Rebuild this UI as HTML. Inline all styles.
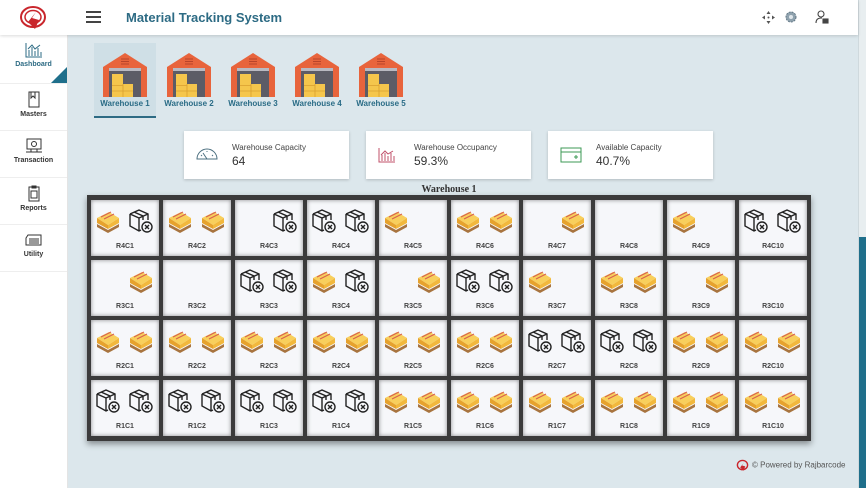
<!DOCTYPE html>
<html><head><meta charset="utf-8"><style>
*{box-sizing:border-box;margin:0;padding:0}
body{width:866px;height:488px;overflow:hidden;font-family:"Liberation Sans",sans-serif;background:#dce7ec;position:relative}
.hdr{position:absolute;left:0;top:0;width:858px;height:35px;background:#fff;box-shadow:0 1px 3px rgba(0,0,0,.15);z-index:2}
.side{position:absolute;left:0;top:35px;width:68px;height:453px;background:#fff;border-right:1px solid #e4e4e4}
.si{height:47px;border-bottom:1px solid #eee;text-align:center;font-size:7px;font-weight:bold;color:#333;padding-top:7px;position:relative}
.si svg{display:block;margin:0 auto 3px}
.sb{position:absolute;left:858px;top:0;width:8px;height:488px;background:#e8eef0;border-left:1px solid #cfd9dd}
.thumb{position:absolute;left:859px;top:237px;width:7px;height:251px;background:#1f6f8b}
.wh{position:absolute;top:43px;width:62px;height:75px;text-align:center;font-size:8px;font-weight:bold;color:#2a6c86}
.wh svg{display:block;margin:8px auto 2px}
.card{position:absolute;top:131px;height:48px;background:#fff;box-shadow:0 1px 3px rgba(0,0,0,.2)}
.card .t{position:absolute;left:48px;top:12px;font-size:8px;color:#444}
.card .v{position:absolute;left:48px;top:23px;font-size:12px;color:#333}
.card svg{position:absolute;left:12px;top:16px}
.grid{position:absolute;left:87px;top:195px;width:724px;height:246px;background:#3b3b3b;padding:5px 4px;display:grid;grid-template-columns:repeat(10,68px);grid-template-rows:repeat(4,56px);gap:4px;box-shadow:0 3px 6px rgba(0,0,0,.4)}
.c{background:#f6f7fa;position:relative;box-shadow:inset 0 0 4px rgba(0,0,0,.45)}
.c svg{position:absolute;top:8px}
.c .a{left:4px}.c .b{left:37px}
.c span{position:absolute;left:0;right:0;top:43px;text-align:center;font-size:7px;font-weight:bold;color:#444}
</style></head><body>
<svg width="0" height="0" style="position:absolute">
<defs>
<symbol id="p" viewBox="0 0 26 24">
<path d="M2 15 L13 21 L24 15 L24 18 L13 24 L2 18Z" fill="#a8743f"/>
<path d="M2 9 L14 3 L24 9 L13 16Z" fill="#f8cf5c"/>
<path d="M2 9 L13 16 L13 20 L2 14Z" fill="#e6a22d"/>
<path d="M13 16 L24 9 L24 14 L13 20Z" fill="#f2b83c"/>
<path d="M6 8 L16 3 M9 10 L19 5" stroke="#d8634e" stroke-width="1.2"/>
</symbol>
<symbol id="x" viewBox="0 0 26 26" fill="none" stroke="#222" stroke-width="1.4">
<path d="M2 6 L11 2 L20 6 L20 12 M2 6 L2 18 L11 23 L13 22 M2 6 L11 10 L20 6 M11 10 L11 23 M6 4 L15 8 L15 12"/>
<circle cx="19" cy="19" r="5"/><path d="M17 17 L21 21 M21 17 L17 21"/>
</symbol>
<symbol id="w" viewBox="0 0 46 46">
<path d="M1 16 L23 2 L45 16 L45 46 L1 46Z" fill="#e8643c"/>
<rect x="7" y="17" width="32" height="29" fill="#5c5c66"/>
<rect x="7" y="17" width="32" height="3" fill="#b9b9c1"/>
<path d="M19 8h8M19 10.5h8M19 13h8" stroke="#b8432a" stroke-width="1"/>
<rect x="10" y="23" width="11" height="23" fill="#f5c64c"/>
<rect x="21" y="33" width="10" height="13" fill="#f5c64c"/>
<path d="M10 34.5h11M10 40h21M21 33v13" stroke="#d9a030" stroke-width=".8"/>
</symbol>
</defs></svg>

<div class="hdr">
<svg style="position:absolute;left:19px;top:5px" width="28" height="26" viewBox="0 0 28 26"><ellipse cx="14" cy="12" rx="12" ry="10" fill="none" stroke="#c9262c" stroke-width="2"/><ellipse cx="14" cy="12" rx="8" ry="6.5" fill="none" stroke="#c9262c" stroke-width="1.5"/><path d="M9 17 L17 7 L13 13 L20 15 L16 24Z" fill="#c9262c"/></svg>
<div style="position:absolute;left:86px;top:11px;width:15px;height:2px;background:#444;box-shadow:0 5px 0 #444,0 10px 0 #444"></div>
<div style="position:absolute;left:126px;top:10px;font-size:13px;font-weight:bold;color:#2d6b84">Material Tracking System</div>
<svg style="position:absolute;left:762px;top:11px" width="13" height="13" viewBox="0 0 13 13" fill="#555"><path d="M6.5 0 L8.5 3 H4.5Z M6.5 13 L4.5 10 H8.5Z M0 6.5 L3 4.5 V8.5Z M13 6.5 L10 8.5 V4.5Z"/><circle cx="6.5" cy="6.5" r="1"/></svg>
<svg style="position:absolute;left:785px;top:11px" width="12" height="12" viewBox="0 0 12 12"><circle cx="6" cy="6" r="5" fill="#8fa2ae" stroke="#627785" stroke-width="1" stroke-dasharray="2 1"/><circle cx="6" cy="6" r="2" fill="#dfe6ea"/></svg>
<svg style="position:absolute;left:815px;top:10px" width="14" height="14" viewBox="0 0 14 14" fill="none" stroke="#444" stroke-width="1.1"><circle cx="6" cy="4" r="3"/><path d="M1 13 C1 8 5 8 7 8"/><rect x="8" y="9" width="5" height="4" fill="#444"/></svg>
</div>
<div class="sb"></div><div class="thumb"></div>

<div class="side">
<div class="si" style="background:#fff;color:#2d6b84;height:49px"><svg width="18" height="16" viewBox="0 0 18 16" fill="none" stroke="#2d6b84" stroke-width="1"><path d="M1 1V15H17M4 14V8M7 14V5M10 14V9M13 14V6M16 14V10M3 7L7 3L10 7L15 3"/></svg>Dashboard
<div style="position:absolute;right:0;bottom:0;width:0;height:0;border-left:16px solid transparent;border-bottom:16px solid #1f6f8b"></div></div>
<div class="si"><svg width="14" height="17" viewBox="0 0 14 17" fill="none" stroke="#333" stroke-width="1"><rect x="2" y="1" width="10" height="15"/><path d="M4 1V7L6 5L8 7V1"/></svg>Masters</div>
<div class="si"><svg width="18" height="16" viewBox="0 0 18 16" fill="none" stroke="#333" stroke-width="1"><rect x="2" y="1" width="14" height="10"/><circle cx="9" cy="6" r="2.5"/><path d="M1 14H17M6 11V14M12 11V14"/></svg>Transaction</div>
<div class="si"><svg width="14" height="17" viewBox="0 0 14 17" fill="none" stroke="#333" stroke-width="1"><rect x="2" y="2" width="10" height="14"/><rect x="5" y="1" width="4" height="2"/><rect x="4" y="6" width="6" height="7"/></svg>Reports</div>
<div class="si"><svg width="18" height="16" viewBox="0 0 18 16" fill="none" stroke="#333" stroke-width="1"><path d="M3 3H16V13H1V6Z"/><path d="M4 7H14M4 9H14M4 11H14"/></svg>Utility</div>
</div>

<div class="wh" style="left:94px;background:#cfdfe6;border-bottom:2px solid #2d6b84">
<svg width="46" height="46"><use href="#w"/></svg>Warehouse 1</div>
<div class="wh" style="left:158px"><svg width="46" height="46"><use href="#w"/></svg>Warehouse 2</div>
<div class="wh" style="left:222px"><svg width="46" height="46"><use href="#w"/></svg>Warehouse 3</div>
<div class="wh" style="left:286px"><svg width="46" height="46"><use href="#w"/></svg>Warehouse 4</div>
<div class="wh" style="left:350px"><svg width="46" height="46"><use href="#w"/></svg>Warehouse 5</div>

<div class="card" style="left:184px;width:165px"><svg width="22" height="14" viewBox="0 0 22 14" fill="none" stroke="#4d7080" stroke-width="1"><path d="M1 12A10 10 0 0 1 21 12Z"/><path d="M11 12L7 6M5 8L6 9M11 4V5M17 8L16 9"/></svg><div class="t">Warehouse Capacity</div><div class="v">64</div></div>
<div class="card" style="left:366px;width:165px"><svg width="18" height="16" viewBox="0 0 18 16" fill="none" stroke="#c0506a" stroke-width="1"><path d="M1 1V15H17M4 14V8M7 14V6M10 14V9M13 14V6M16 14V9M3 8L7 4L10 7L15 4"/></svg><div class="t">Warehouse Occupancy</div><div class="v">59.3%</div></div>
<div class="card" style="left:548px;width:165px"><svg width="22" height="16" viewBox="0 0 22 16" fill="none" stroke="#3d9a56" stroke-width="1"><rect x="1" y="1" width="20" height="14"/><path d="M1 5H21M14 10H18M16 8V12"/></svg><div class="t">Available Capacity</div><div class="v">40.7%</div></div>

<div style="position:absolute;left:87px;top:184px;width:724px;text-align:center;font-family:'Liberation Serif',serif;font-weight:bold;font-size:10px;color:#333">Warehouse 1</div>

<div class="grid" id="g"></div>
<div style="position:absolute;left:736px;top:459px;font-size:8px;color:#555"><svg style="vertical-align:middle;margin-right:3px" width="13" height="13" viewBox="0 0 28 26"><ellipse cx="14" cy="12" rx="11" ry="10" fill="none" stroke="#c9262c" stroke-width="3"/><path d="M9 17 L17 7 L13 13 L20 15 L16 24Z" fill="#c9262c"/></svg>© Powered by Rajbarcode</div>
<script>
var d=[["pb","pp","-b","bb","p-","pp","-p","--","p-","bb"],["-p","--","bb","pb","-p","bb","p-","pp","-p","--"],["pp","pp","pp","pp","pp","pp","bb","bb","pp","pp"],["bb","bb","bb","bb","pp","pp","pp","pp","pp","pp"]];
var h="";for(var r=0;r<4;r++)for(var c=0;c<10;c++){var s=d[r][c],o='<div class="c">';
for(var k=0;k<2;k++){var t=s[k];if(t!="-")o+='<svg class="'+(k?"b":"a")+'" width="26" height="26"><use href="#'+(t=="p"?"p":"x")+'"/></svg>';}
o+='<span>R'+(4-r)+'C'+(c+1)+'</span></div>';h+=o;}
document.getElementById("g").innerHTML=h;
</script>
</body></html>
